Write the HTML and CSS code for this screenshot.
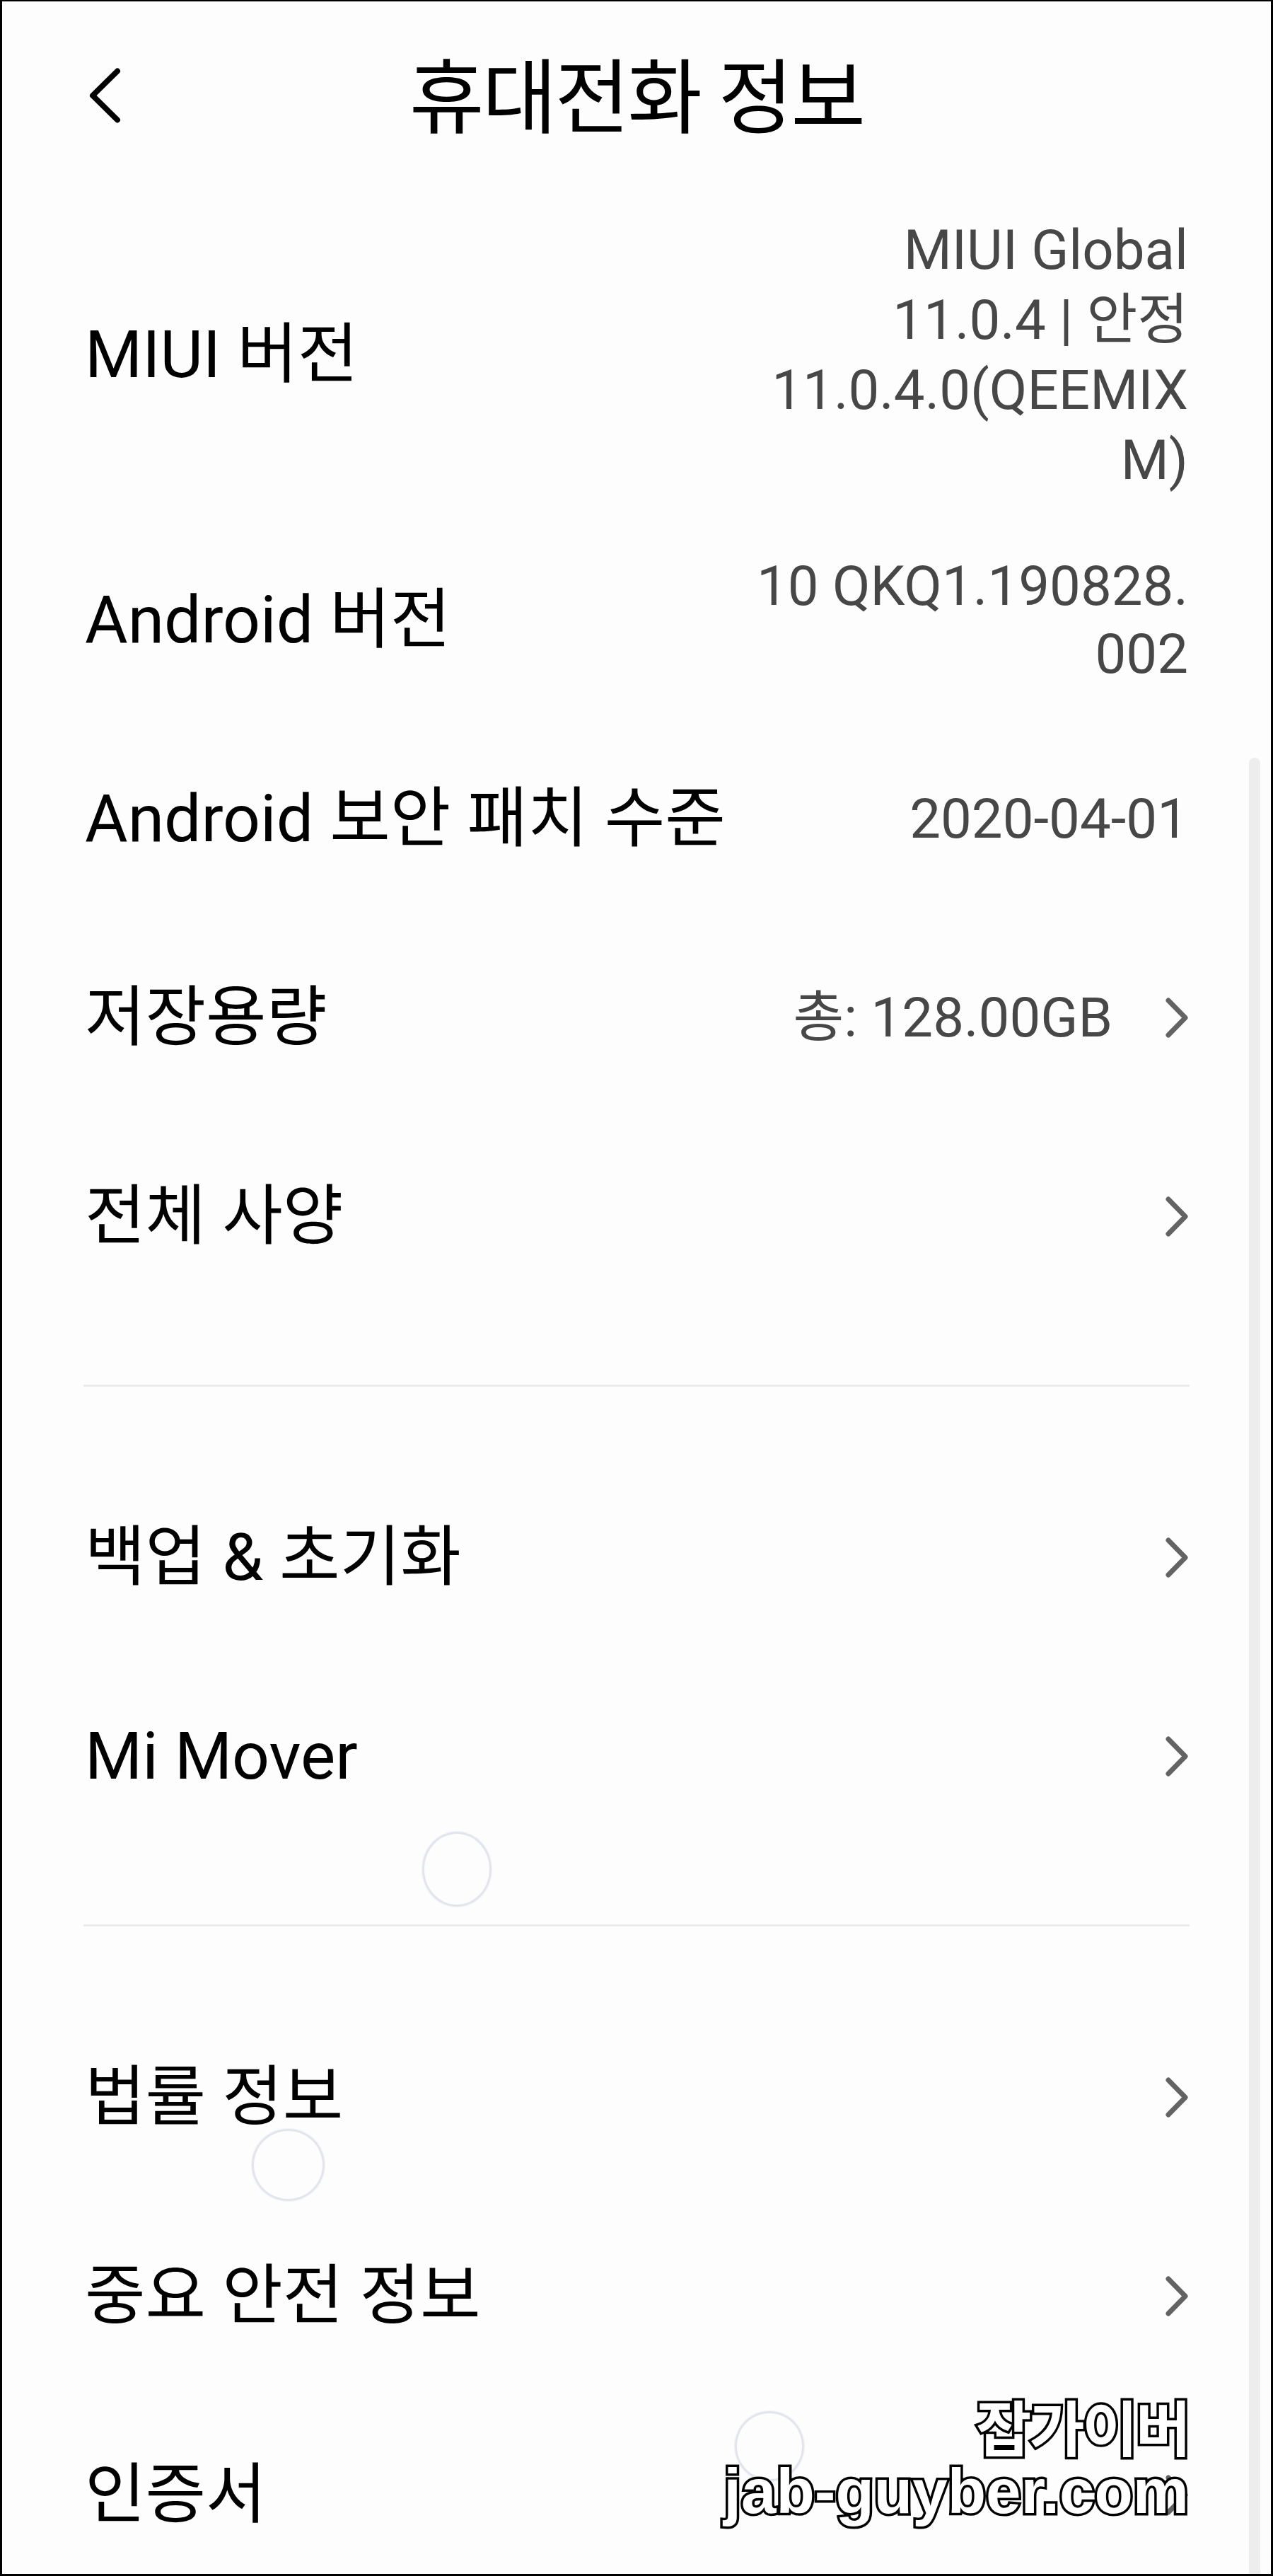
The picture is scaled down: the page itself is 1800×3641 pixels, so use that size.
FILE: index.html
```html
<!DOCTYPE html>
<html lang="ko">
<head>
<meta charset="utf-8">
<title>휴대전화 정보</title>
<link rel="stylesheet" href="styles.css">
</head>
<body>
<div class="screen">
  <header class="topbar">
    <div class="topbar-side">
      <svg class="back-icon" width="60" height="90" viewBox="0 0 60 90" aria-hidden="true">
        <polyline points="46,10.5 11,45 46,79.5" fill="none" stroke="#000" stroke-width="8" stroke-linecap="round" stroke-linejoin="round"/>
      </svg>
    </div>
    <h1 class="title">휴대전화 정보</h1>
    <div class="topbar-side"></div>
  </header>

  <main class="content">
    <section class="group">
      <div class="row">
        <span class="label">MIUI 버전</span>
        <span class="value value-tall">MIUI Global<br>11.0.4 | 안정<br>11.0.4.0(QEEMIX<br>M)</span>
      </div>
      <div class="row">
        <span class="label">Android 버전</span>
        <span class="value">10 QKQ1.190828.<br>002</span>
      </div>
      <div class="row">
        <span class="label">Android 보안 패치 수준</span>
        <span class="value">2020-04-01</span>
      </div>
      <div class="row">
        <span class="label">저장용량</span>
        <span class="row-end">
          <span class="value">총: 128.00GB</span>
          <svg class="chevron" width="32" height="57" viewBox="0 0 32 57" aria-hidden="true"><polyline points="4,4 28,28.5 4,53" fill="none" stroke="#636363" stroke-width="7" stroke-linecap="round" stroke-linejoin="round"/></svg>
        </span>
      </div>
      <div class="row">
        <span class="label">전체 사양</span>
        <svg class="chevron" width="32" height="57" viewBox="0 0 32 57" aria-hidden="true"><polyline points="4,4 28,28.5 4,53" fill="none" stroke="#636363" stroke-width="7" stroke-linecap="round" stroke-linejoin="round"/></svg>
      </div>
    </section>

    <hr class="divider">

    <section class="group">
      <div class="row">
        <span class="label">백업 &amp; 초기화</span>
        <svg class="chevron" width="32" height="57" viewBox="0 0 32 57" aria-hidden="true"><polyline points="4,4 28,28.5 4,53" fill="none" stroke="#636363" stroke-width="7" stroke-linecap="round" stroke-linejoin="round"/></svg>
      </div>
      <div class="row">
        <span class="label">Mi Mover</span>
        <svg class="chevron" width="32" height="57" viewBox="0 0 32 57" aria-hidden="true"><polyline points="4,4 28,28.5 4,53" fill="none" stroke="#636363" stroke-width="7" stroke-linecap="round" stroke-linejoin="round"/></svg>
      </div>
    </section>

    <hr class="divider">

    <section class="group">
      <div class="row">
        <span class="label">법률 정보</span>
        <svg class="chevron" width="32" height="57" viewBox="0 0 32 57" aria-hidden="true"><polyline points="4,4 28,28.5 4,53" fill="none" stroke="#636363" stroke-width="7" stroke-linecap="round" stroke-linejoin="round"/></svg>
      </div>
      <div class="row">
        <span class="label">중요 안전 정보</span>
        <svg class="chevron" width="32" height="57" viewBox="0 0 32 57" aria-hidden="true"><polyline points="4,4 28,28.5 4,53" fill="none" stroke="#636363" stroke-width="7" stroke-linecap="round" stroke-linejoin="round"/></svg>
      </div>
      <div class="row">
        <span class="label">인증서</span>
        <svg class="chevron" width="32" height="57" viewBox="0 0 32 57" aria-hidden="true"><polyline points="4,4 28,28.5 4,53" fill="none" stroke="#636363" stroke-width="7" stroke-linecap="round" stroke-linejoin="round"/></svg>
      </div>
    </section>
  </main>

  <div class="scrollbar"></div>
  <span class="ripple ripple-1"></span>
  <span class="ripple ripple-2"></span>
  <span class="ripple ripple-3"></span>

  <div class="watermark">
    <div class="wm-ko">잡가이버</div>
    <div class="wm-en">jab-guyber.com</div>
  </div>
</div>
</body>
</html>
```
FILE: styles.css
```css
* {
  box-sizing: border-box;
}

html,
body {
  margin: 0;
  padding: 0;
  background: #fdfdfd;
}

body {
  font-family: Roboto, "Noto Sans CJK KR", sans-serif;
  color: #000;
}

.screen {
  position: relative;
  width: 1800px;
  height: 3641px;
  overflow: hidden;
  background: #fdfdfd;
  border-style: solid;
  border-color: #000;
  border-width: 2px 3px 3px 3px;
}

/* ---------- top bar ---------- */
.topbar {
  height: 266px;
  padding: 0 117px;
  display: grid;
  grid-template-columns: 1fr auto 1fr;
  align-items: center;
}

.topbar-side {
  display: flex;
  align-items: center;
}

.back-icon {
  display: block;
}

.title {
  margin: 10px 0 0;
  font-size: 115px;
  font-weight: 400;
  letter-spacing: -3px;
  line-height: 1.2;
  white-space: nowrap;
}

/* ---------- list ---------- */
.content {
  padding: 0 117px;
}

.group {
  display: flex;
  flex-direction: column;
}

.row {
  display: flex;
  align-items: center;
  justify-content: space-between;
  min-height: 281px;
  padding: 36px 0;
}

.label {
  font-size: 93px;
  line-height: 1.2;
  white-space: nowrap;
  color: #000;
}

.value {
  font-size: 78px;
  line-height: 96px;
  color: #474747;
  text-align: right;
  white-space: nowrap;
}

.value-tall {
  line-height: 99px;
}

.row-end {
  display: flex;
  align-items: center;
  gap: 75px;
}

.chevron {
  display: block;
  flex: none;
}

.divider {
  border: 0;
  height: 3px;
  margin: 97px -2px 101px;
  background: #ebebeb;
}

/* ---------- overlays ---------- */
.scrollbar {
  position: absolute;
  right: 15px;
  top: 1069px;
  bottom: 0;
  width: 16px;
  border-radius: 8px 8px 0 0;
  background: #ededed;
}

.ripple {
  position: absolute;
  border: 3px solid #e3e5ee;
  border-radius: 50%;
  box-shadow: 0 0 2px rgba(200, 204, 222, 0.6);
}

.ripple-1 {
  left: 594px;
  top: 2587px;
  width: 98px;
  height: 106px;
}

.ripple-2 {
  left: 353px;
  top: 3007px;
  width: 103px;
  height: 102px;
}

.ripple-3 {
  left: 1036px;
  top: 3406px;
  width: 98px;
  height: 99px;
}

.watermark {
  position: absolute;
  right: 116px;
  top: 3383px;
  text-align: right;
  color: #fff;
  -webkit-text-stroke: 7px #000;
  paint-order: stroke fill;
  font-weight: 700;
}

.wm-ko {
  font-family: "Noto Sans CJK KR", sans-serif;
  font-size: 85px;
  letter-spacing: -3px;
  line-height: 1;
}

.wm-en {
  margin-top: 7px;
  font-family: "Liberation Sans", Arial, sans-serif;
  font-size: 89px;
  line-height: 1;
}
```
